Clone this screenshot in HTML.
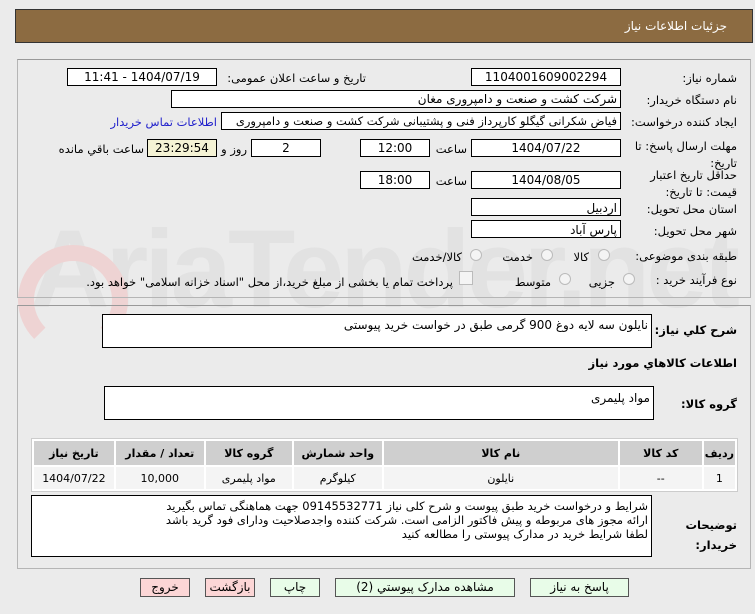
<!DOCTYPE html>
<html><head><meta charset="utf-8"><style>
body{margin:0;width:755px;height:614px;background:#ebebeb;font-family:"DejaVu Sans","Liberation Sans",sans-serif;font-size:11px;color:#000;position:relative;overflow:hidden}
.a{position:absolute}
.box{position:absolute;background:#fff;border:1px solid #000;box-sizing:border-box;font-size:12px;line-height:16px;direction:rtl;padding:0 3px;white-space:nowrap;overflow:hidden}
.c{text-align:center}
.l{position:absolute;direction:rtl;white-space:nowrap;font-size:11.5px;line-height:14px}
.panel{position:absolute;border:1px solid #b5b5b5;border-top-color:#999;box-sizing:border-box}
.rad{position:absolute;width:12px;height:12px;border:1px solid #bbb;border-radius:50%;background:#f4f4f4;box-sizing:border-box}
.btn{position:absolute;border:1px solid #555;box-sizing:border-box;height:19px;font-size:12px;line-height:17px;text-align:center;direction:rtl}
table{border-collapse:separate;border-spacing:2px;position:absolute;left:31px;top:438px;width:707px;font-size:11px;direction:rtl;background:#fff;border:1px solid #ccc}
th{background:#cfcfcf;height:22px;font-weight:bold}
td{background:#f4f4f4;height:20px;text-align:center}
</style></head><body>
<div class="a" style="left:15px;top:9px;width:738px;height:34px;background:#8c6b41;border:1px solid #333;box-sizing:border-box"></div>
<div class="l" style="right:28px;top:19px;color:#fff;font-size:12px">جزئیات اطلاعات نیاز</div>
<div class="a" style="left:30px;top:215px;font-size:110px;color:#e2e2e2;font-family:'Liberation Sans',sans-serif;font-weight:bold;letter-spacing:-4px;line-height:110px">AriaTender.net</div>
<div class="a" style="left:18px;top:245px;width:110px;height:110px;border:16px solid #eed3d3;border-radius:50%;box-sizing:border-box;border-bottom-color:transparent"></div>

<div class="panel" style="left:17px;top:59px;width:734px;height:239px"></div>
<div class="l" style="right:18px;top:71px">شماره نیاز:</div>
<div class="box c" style="left:471px;top:68px;width:150px;height:18px">1104001609002294</div>
<div class="l" style="right:389px;top:71px">تاریخ و ساعت اعلان عمومی:</div>
<div class="box c" style="left:67px;top:68px;width:150px;height:18px">1404/07/19 - 11:41</div>
<div class="l" style="right:18px;top:93px">نام دستگاه خریدار:</div>
<div class="box" style="left:171px;top:90px;width:450px;height:18px">شرکت کشت و صنعت و دامپروری مغان</div>
<div class="l" style="right:18px;top:115px">ایجاد کننده درخواست:</div>
<div class="box" style="left:221px;top:112px;width:400px;height:18px;font-size:11.5px">فیاض شکرانی گیگلو کارپرداز فنی و پشتیبانی شرکت کشت و صنعت و دامپروری</div>
<div class="l" style="right:538px;top:115px;color:#22c">اطلاعات تماس خریدار</div>
<div class="l" style="right:18px;top:138px;line-height:17px">مهلت ارسال پاسخ: تا<br>تاریخ:</div>
<div class="box c" style="left:471px;top:139px;width:150px;height:18px">1404/07/22</div>
<div class="l" style="right:288px;top:142px">ساعت</div>
<div class="box c" style="left:360px;top:139px;width:70px;height:18px">12:00</div>
<div class="box c" style="left:251px;top:139px;width:70px;height:18px">2</div>
<div class="l" style="right:508px;top:142px">روز و</div>
<div class="box c" style="left:147px;top:139px;width:70px;height:18px;background:#f5f3d5">23:29:54</div>
<div class="l" style="right:611px;top:142px">ساعت باقي مانده</div>
<div class="l" style="right:18px;top:167px;line-height:17px">حداقل تاریخ اعتبار<br>قیمت: تا تاریخ:</div>
<div class="box c" style="left:471px;top:171px;width:150px;height:18px">1404/08/05</div>
<div class="l" style="right:288px;top:174px">ساعت</div>
<div class="box c" style="left:360px;top:171px;width:70px;height:18px">18:00</div>
<div class="l" style="right:18px;top:202px">استان محل تحویل:</div>
<div class="box" style="left:471px;top:198px;width:150px;height:18px;line-height:18px">اردبیل</div>
<div class="l" style="right:18px;top:224px">شهر محل تحویل:</div>
<div class="box" style="left:471px;top:220px;width:150px;height:18px;line-height:18px">پارس آباد</div>
<div class="l" style="right:18px;top:249px">طبقه بندی موضوعی:</div>
<div class="rad" style="left:598px;top:249px"></div><div class="l" style="right:166px;top:250px">کالا</div>
<div class="rad" style="left:541px;top:249px"></div><div class="l" style="right:222px;top:250px">خدمت</div>
<div class="rad" style="left:470px;top:249px"></div><div class="l" style="right:293px;top:250px">کالا/خدمت</div>
<div class="l" style="right:18px;top:273px">نوع فرآیند خرید :</div>
<div class="rad" style="left:623px;top:273px"></div><div class="l" style="right:140px;top:275px">جزیی</div>
<div class="rad" style="left:559px;top:273px"></div><div class="l" style="right:204px;top:275px">متوسط</div>
<div class="a" style="left:459px;top:271px;width:12px;height:12px;border:1px solid #bbb;background:#f4f4f4"></div>
<div class="l" style="right:302px;top:275px">پرداخت تمام یا بخشی از مبلغ خرید،از محل "اسناد خزانه اسلامی" خواهد بود.</div>

<div class="panel" style="left:17px;top:305px;width:734px;height:264px"></div>
<div class="l" style="right:18px;top:323px;font-weight:bold">شرح کلي نیاز:</div>
<div class="box" style="left:102px;top:314px;width:550px;height:34px;line-height:20px">نایلون سه لایه دوغ 900 گرمی طبق در خواست خرید پیوستی</div>
<div class="l" style="right:18px;top:356px;font-weight:bold">اطلاعات کالاهاي مورد نیاز</div>
<div class="l" style="right:18px;top:397px;font-weight:bold">گروه کالا:</div>
<div class="box" style="left:104px;top:386px;width:550px;height:34px;line-height:22px">مواد پلیمری</div>
<table><tr><th style="width:25px">ردیف</th><th style="width:80px">کد کالا</th><th style="width:232px">نام کالا</th><th style="width:86px">واحد شمارش</th><th style="width:84px">گروه کالا</th><th style="width:86px">تعداد / مقدار</th><th>تاریخ نیاز</th></tr>
<tr><td>1</td><td>--</td><td>نایلون</td><td>کیلوگرم</td><td>مواد پلیمری</td><td>10,000</td><td>1404/07/22</td></tr></table>
<div class="l" style="right:18px;top:515px;font-weight:bold;line-height:20px">توضیحات<br>خریدار:</div>
<div class="box" style="left:31px;top:495px;width:621px;height:62px;line-height:14px;padding-top:3px;font-size:11.5px">شرایط و درخواست خرید طبق پیوست و شرح کلی نیاز 09145532771 جهت هماهنگی تماس بگیرید<br>ارائه مجوز های مربوطه و پیش فاکتور الزامی است. شرکت کننده واجدصلاحیت  ودارای فود گرید باشد<br>لطفا شرایط خرید در مدارک پیوستی را مطالعه کنید</div>

<div class="btn" style="left:530px;top:578px;width:99px;background:#e8fce8">پاسخ به نیاز</div>
<div class="btn" style="left:335px;top:578px;width:180px;background:#e8fce8">مشاهده مدارک پیوستي (2)</div>
<div class="btn" style="left:270px;top:578px;width:50px;background:#e8fce8">چاپ</div>
<div class="btn" style="left:205px;top:578px;width:50px;background:#fcd6d6">بازگشت</div>
<div class="btn" style="left:140px;top:578px;width:50px;background:#fcd6d6">خروج</div>
</body></html>
